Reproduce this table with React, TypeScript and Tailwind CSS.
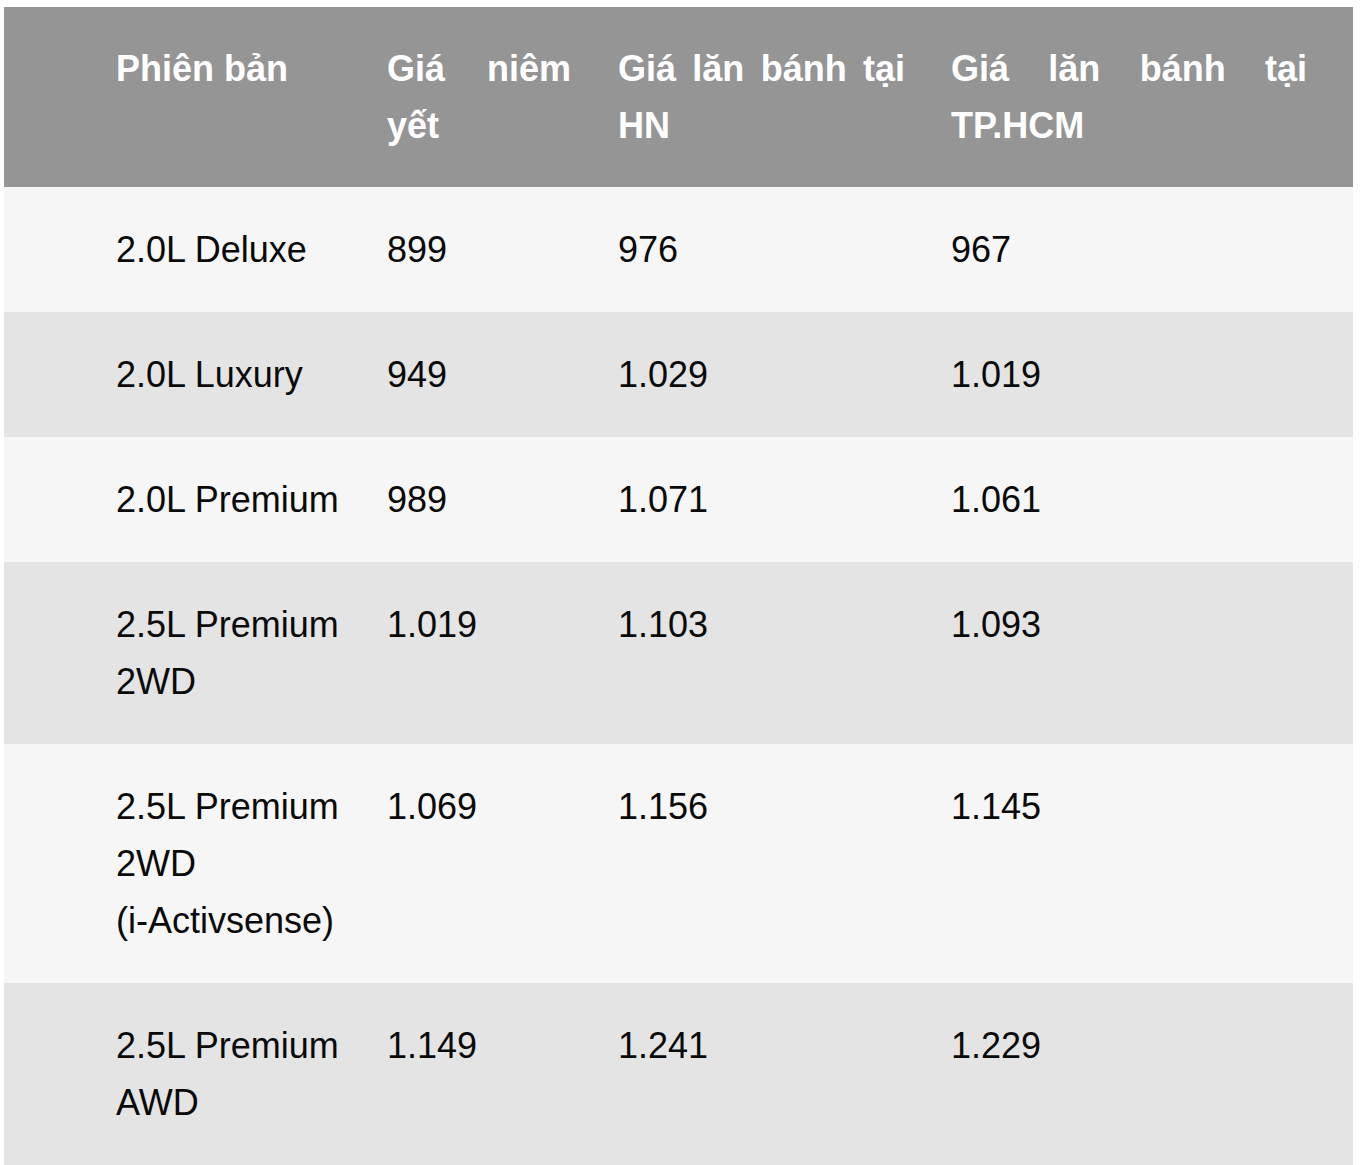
import React from "react";

const rows: { name: string[]; a: string; b: string; c: string }[] = [
  { name: ["2.0L Deluxe"], a: "899", b: "976", c: "967" },
  { name: ["2.0L Luxury"], a: "949", b: "1.029", c: "1.019" },
  { name: ["2.0L Premium"], a: "989", b: "1.071", c: "1.061" },
  { name: ["2.5L Premium 2WD"], a: "1.019", b: "1.103", c: "1.093" },
  { name: ["2.5L Premium 2WD", "(i-Activsense)"], a: "1.069", b: "1.156", c: "1.145" },
  { name: ["2.5L Premium AWD"], a: "1.149", b: "1.241", c: "1.229" },
];

export default function App() {
  return (
    <div className="w-[1360px] h-[1165px] bg-white pt-[7px] pl-[4px]" style={{ fontFamily: '"Liberation Sans", Arial, sans-serif' }}>
      <table className="table-fixed border-collapse w-[1349px] text-[36px] leading-[57px] text-justify">
        <colgroup>
          <col className="w-[360px]" />
          <col className="w-[231px]" />
          <col className="w-[333px]" />
          <col className="w-[425px]" />
        </colgroup>
        <thead>
          <tr className="bg-[#959595] text-white font-bold">
            <th className="align-top font-bold text-justify pl-[112px] pr-[23px] py-[33px]">Phiên bản</th>
            <th className="align-top font-bold text-justify pl-[23px] pr-[24px] py-[33px]">Giá niêm yết</th>
            <th className="align-top font-bold text-justify pl-[23px] pr-[23px] py-[33px]">Giá lăn bánh tại HN</th>
            <th className="align-top font-bold text-justify pl-[23px] pr-[46px] py-[33px]">Giá lăn bánh tại TP.HCM</th>
          </tr>
        </thead>
        <tbody className="text-[#0a0a0a]">
          {rows.map((r, i) => (
            <tr key={i} className={i % 2 === 0 ? "bg-[#f6f6f6]" : "bg-[#e4e4e4]"}>
              <td className="align-top text-left pl-[112px] pr-[23px] py-[34px]">
                {r.name.map((n, j) => (
                  <React.Fragment key={j}>
                    {j > 0 && <br />}
                    {n}
                  </React.Fragment>
                ))}
              </td>
              <td className="align-top text-left pl-[23px] pr-[24px] py-[34px]">{r.a}</td>
              <td className="align-top text-left pl-[23px] pr-[23px] py-[34px]">{r.b}</td>
              <td className="align-top text-left pl-[23px] pr-[46px] py-[34px]">{r.c}</td>
            </tr>
          ))}
        </tbody>
      </table>
    </div>
  );
}
